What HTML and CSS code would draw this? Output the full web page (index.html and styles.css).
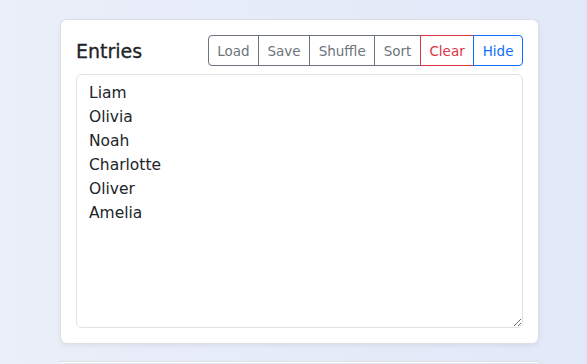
FILE: index.html
```html
<!DOCTYPE html>
<html lang="en">
  <head>
    <meta charset="UTF-8" />
    <title>Entries</title>
    <link rel="stylesheet" href="styles.css">
  </head>
  <body>
    <div class="wrap">
      <div class="card">
        <div class="card-head">
          <h2>Entries</h2>
          <div class="btn-group">
            <button class="btn secondary">Load</button>
            <button class="btn secondary">Save</button>
            <button class="btn secondary">Shuffle</button>
            <button class="btn secondary">Sort</button>
            <button class="btn danger">Clear</button>
            <button class="btn primary">Hide</button>
          </div>
        </div>
        <textarea class="entries">Liam
Olivia
Noah
Charlotte
Oliver
Amelia</textarea>
      </div>
      <div class="card next"></div>
    </div>
  </body>
</html>
```

FILE: styles.css
```css
body {
  margin: 0;
  height: 364px;
  overflow: hidden;
  font-family: "DejaVu Sans", sans-serif;
  color: #212529;
  background: linear-gradient(90deg, #eaeff9 0%, #e1e8f8 100%);
}
.wrap {
  padding: 19px 48px 0 60px;
}
.card {
  background: #fff;
  border: 1px solid #dcdfe4;
  border-radius: 7px;
  box-shadow: 0 2px 5px rgba(0, 0, 0, 0.06);
  padding: 15px;
}
.card.next {
  margin-top: 17px;
  height: 1px;
  padding: 0;
  border-bottom: 0;
}
.card-head {
  display: flex;
  justify-content: space-between;
  align-items: center;
  margin-bottom: 8px;
}
h2 {
  margin: 0;
  font-size: 19px;
  font-weight: 500;
  -webkit-text-stroke: 0.3px #212529;
}
.btn-group {
  display: flex;
}
.btn {
  font-family: inherit;
  font-size: 13.5px;
  background: #fff;
  border: 1px solid #6c757d;
  color: #6c757d;
  height: 31px;
  padding: 0 8.5px;
  margin-left: -1px;
  position: relative;
}
.btn:first-child {
  border-radius: 4px 0 0 4px;
  margin-left: 0;
}
.btn:last-child {
  border-radius: 0 4px 4px 0;
}
.btn.danger {
  border-color: #dc3545;
  color: #dc3545;
  z-index: 1;
}
.btn.primary {
  border-color: #0d6efd;
  color: #0d6efd;
  z-index: 1;
}
.entries {
  display: block;
  width: 100%;
  box-sizing: border-box;
  height: 254px;
  border: 1px solid #dee2e6;
  border-radius: 6px;
  padding: 6px 12px;
  font-family: inherit;
  font-size: 15.5px;
  line-height: 24px;
  color: #212529;
}
```
